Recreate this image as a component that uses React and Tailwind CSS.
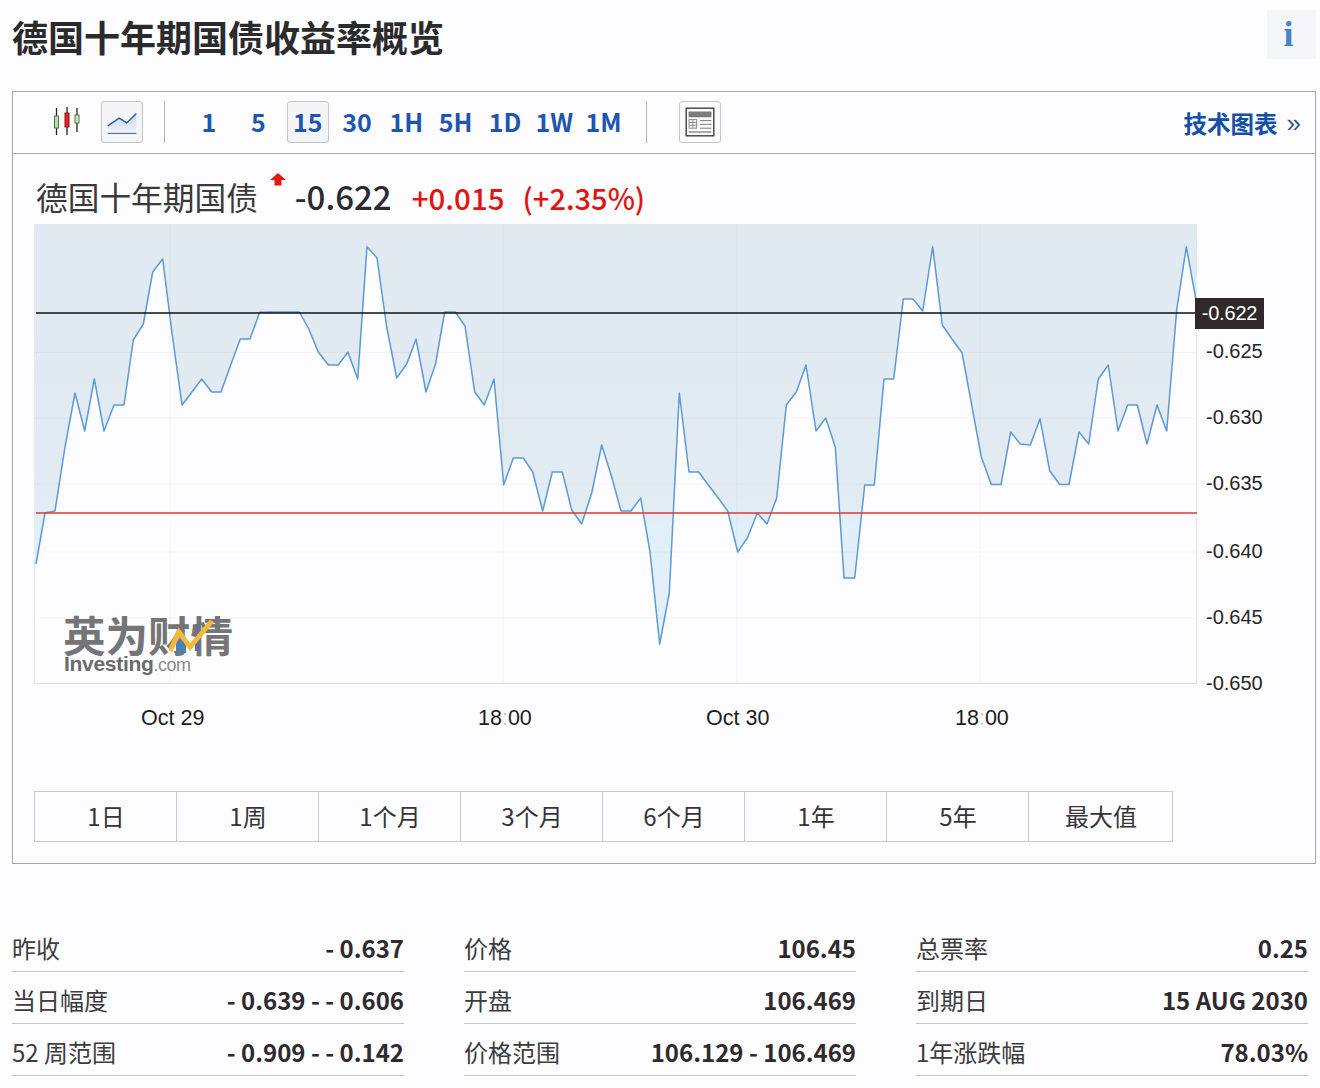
const pts = [[36,564],[45,513],[55,511],[65,447],[75,393],[84.7,431],[94.3,379],[104,431],[114,405],[124,405],[133.3,340],[143.3,324],[152.7,272],[162.7,259],[172,333],[182,405],[192,392],[201.7,379],[211.7,392],[221,392],[230.7,365],[240.3,339],[250,339],[259.7,312.3],[269.7,312],[279.3,312],[289.3,312],[299.3,312],[308.3,328],[318.3,352],[328.3,365],[338.3,365],[348,352],[357.7,379],[367,246.7],[377,258],[386.7,327],[396.7,378],[406.7,364],[416,339],[426,392],[435.5,364],[444.7,312],[455.3,312],[465,326],[474.7,392],[484.3,405],[494,379],[503.7,485],[513.3,458],[523.3,458],[532.7,472],[542.7,511],[552.3,472],[562.3,472],[571.7,510],[581.7,524],[591.7,493],[601.7,445],[611.7,477],[621,511],[631,511],[640.7,498],[650,552],[659.7,644],[669.3,593],[679.3,393],[689,472],[698.7,472],[708.3,485],[718.3,498],[727.7,511],[737.7,552],[747.3,538],[757.3,513],[767,524],[776.7,498],[786.3,405],[796.3,392],[806,365],[816,431],[825.7,418],[835.3,447],[844,578],[854.7,578],[864.7,485],[874.3,485],[884,379],[893.7,379],[903.3,299],[913,299],[922.7,311],[932.7,246.7],[942.3,325],[952,339],[962,352.7],[971.7,405],[981.3,457],[991.3,484.5],[1001,484.5],[1010.7,432],[1020.3,444],[1030.3,445],[1040,418.7],[1049.7,470.7],[1059.7,484.5],[1069,484.5],[1079,432],[1088.7,444],[1098.3,379],[1108.3,365],[1118,431],[1127.7,405],[1137.3,405],[1147,444],[1157,405],[1166.7,431],[1176.7,310],[1186.3,246.7],[1196,300]];
const linePts = pts.map((p) => p.join(",")).join(" ");
const areaPts = `34,224 34,564 ${linePts} 1197,300 1197,224`;

const intervals = ["1", "5", "15", "30", "1H", "5H", "1D", "1W", "1M"];
const ranges = ["1日", "1周", "1个月", "3个月", "6个月", "1年", "5年", "最大值"];
const columns = [
  [["昨收", "- 0.637"], ["当日幅度", "- 0.639 - - 0.606"], ["52 周范围", "- 0.909 - - 0.142"]],
  [["价格", "106.45"], ["开盘", "106.469"], ["价格范围", "106.129 - 106.469"]],
  [["总票率", "0.25"], ["到期日", "15 AUG 2030"], ["1年涨跌幅", "78.03%"]],
];
const axis = [["-0.625", 358], ["-0.630", 424], ["-0.635", 490], ["-0.640", 558], ["-0.645", 624], ["-0.650", 690]];
const hGrid = [352.5, 418, 484, 552, 618];
const vGrid = [170, 503, 737, 980];

function CandleIcon() {
  return (
    <svg viewBox="0 0 42 42" className="w-[42px] h-[42px]">
      <g stroke="#222" strokeWidth="1.3">
        <line x1="10.5" y1="6" x2="10.5" y2="33" />
        <line x1="21" y1="5" x2="21" y2="33" />
        <line x1="31" y1="6" x2="31" y2="30" />
      </g>
      <rect x="8.5" y="14" width="4" height="12" fill="#b7dcae" stroke="#4a7a45" />
      <rect x="19" y="11" width="4" height="14" fill="#e0231c" stroke="#8a1a16" />
      <rect x="29" y="13" width="4" height="8" fill="#cfe6c8" stroke="#4a7a45" />
    </svg>
  );
}

function LineIcon() {
  return (
    <svg viewBox="0 0 42 42" className="w-10 h-10">
      <defs>
        <linearGradient id="iconFill" x1="0" y1="0" x2="0" y2="1">
          <stop offset="0" stopColor="#c6d4ea" />
          <stop offset="1" stopColor="#eef2f9" />
        </linearGradient>
      </defs>
      <polygon points="6,25 18,17 26,22 36,12 36,32 6,32" fill="url(#iconFill)" />
      <polyline points="6,25 18,17 26,22 36,12" fill="none" stroke="#2a5c9e" strokeWidth="1.5" />
      <line x1="6" y1="33" x2="36" y2="33" stroke="#5c6f8c" strokeWidth="1.2" />
    </svg>
  );
}

function TableIcon() {
  return (
    <svg viewBox="0 0 42 42" className="w-10 h-10">
      <rect x="6.5" y="6.5" width="29" height="29" fill="#fafafa" stroke="#444" strokeWidth="1.5" />
      <rect x="9" y="10" width="24" height="6" fill="#7b7b7b" />
      <g stroke="#8a8a8a" strokeWidth="1" fill="none">
        <rect x="9.5" y="18.5" width="8" height="9" />
        <line x1="9.5" y1="21.5" x2="17.5" y2="21.5" />
        <line x1="9.5" y1="24.5" x2="17.5" y2="24.5" />
        <line x1="13.5" y1="18.5" x2="13.5" y2="27.5" />
      </g>
      <g stroke="#777" strokeWidth="1">
        <line x1="21" y1="19.5" x2="33" y2="19.5" />
        <line x1="21" y1="23.5" x2="33" y2="23.5" />
        <line x1="21" y1="27.5" x2="33" y2="27.5" />
      </g>
      <line x1="9" y1="31.5" x2="33" y2="31.5" stroke="#555" strokeWidth="1" />
    </svg>
  );
}

function Chart() {
  return (
    <div className="relative h-[516px]">
      <svg viewBox="13 224 1301 516" className="block w-[1301px] h-[516px] [font-family:'Liberation_Sans',Arial,sans-serif]">
        <defs>
          <linearGradient id="areaFill" gradientUnits="userSpaceOnUse" x1="0" y1="224" x2="0" y2="644">
            <stop offset="0" stopColor="#e1e9f1" />
            <stop offset="0.65" stopColor="#e2ebf2" />
            <stop offset="0.72" stopColor="#e1eff9" />
            <stop offset="1" stopColor="#e3eef7" />
          </linearGradient>
        </defs>
        <polygon points={areaPts} fill="url(#areaFill)" />
        {hGrid.map((y) => (
          <line key={y} x1="34" x2="1196" y1={y} y2={y} stroke="#000" strokeOpacity="0.035" />
        ))}
        {vGrid.map((x) => (
          <line key={x} x1={x} x2={x} y1="224" y2="683" stroke="#000" strokeOpacity="0.03" />
        ))}
        <line x1="34.5" x2="34.5" y1="560" y2="683" stroke="#e4e4e8" />
        <line x1="1196.5" x2="1196.5" y1="300" y2="683" stroke="#e4e4e8" />
        <line x1="34" x2="1197" y1="683.5" y2="683.5" stroke="#dcdcdf" />
        <polyline points={linePts} fill="none" stroke="#5b9ad6" strokeWidth="1.5" strokeLinejoin="round" />
        <line x1="36" x2="1197" y1="313" y2="313" stroke="#111" strokeWidth="1.6" />
        <line x1="36" x2="1197" y1="513" y2="513" stroke="#e2372c" strokeWidth="1.6" />
        {axis.map(([t, y]) => (
          <text key={t} x="1206" y={y} fontSize="20" fill="#262626">{t}</text>
        ))}
        <text x="141" y="725" fontSize="21.5" fill="#1c1c1c">Oct 29</text>
        <text x="478" y="725" fontSize="21.5" fill="#1c1c1c">18<tspan fill="#c9c9c9">:</tspan>00</text>
        <text x="706" y="725" fontSize="21.5" fill="#1c1c1c">Oct 30</text>
        <text x="955" y="725" fontSize="21.5" fill="#1c1c1c">18<tspan fill="#c9c9c9">:</tspan>00</text>
      </svg>
      <div className="absolute left-[1182px] top-[74px] w-[69px] h-[31px] bg-[#2e2a2a] text-white text-[20px] leading-[30px] text-center tracking-[-0.2px] [font-family:'Liberation_Sans',Arial,sans-serif]">
        -0.622
      </div>
      <div className="absolute left-[51px] top-[390px] w-[180px] text-[#757577]">
        <div className="-ml-px text-[42.5px] leading-[40px] font-bold whitespace-nowrap">英为财情</div>
        <div className="flex items-baseline [font-family:'Liberation_Sans',Arial,sans-serif] leading-[20px]">
          <span className="text-[21px] font-bold tracking-[-0.3px] text-[#6a6a6c]">Investing</span>
          <span className="text-[18px] text-[#8c8c8e] tracking-[-0.5px]">.com</span>
        </div>
      </div>
      <svg viewBox="0 0 50 40" className="absolute left-[156px] top-[394px] w-[50px] h-[40px]">
        <rect x="7" y="21" width="10" height="14" fill="#4d7fb0" />
        <rect x="26" y="6" width="5" height="27" fill="#6a6f90" />
        <polyline points="1,33 10,14 21,29 43,3" fill="none" stroke="#f5b93a" strokeWidth="5" />
      </svg>
    </div>
  );
}

export default function App() {
  return (
    <div className="min-h-screen bg-[#fdfcfe] pl-3 pr-1 [font-family:'Noto_Sans_CJK_SC','Liberation_Sans',sans-serif] overflow-hidden">
      <header className="h-[91px] flex justify-between items-start">
        <h1 className="mt-[11px] text-[36px] leading-[50px] font-bold text-[#2b2a2c]">德国十年期国债收益率概览</h1>
        <button className="mt-[10px] w-[49px] h-[49px] bg-[#f5f6fa] text-[#4a80cc] text-[36px] leading-[49px] font-bold pr-[6px] [font-family:'Liberation_Serif',serif]">i</button>
      </header>

      <section className="w-[1304px] h-[773px] border border-[#a6a6a8]">
        <div className="h-[62px] border-b border-[#a9a9ab] flex items-center pl-[33px] pr-[14px]">
          <div className="w-[42px] h-[42px]"><CandleIcon /></div>
          <div className="ml-[13px] -mt-[1px] w-[42px] h-[42px] border border-[#c4c4c6] rounded-[3px] bg-[#f3f5f9] flex items-center justify-center"><LineIcon /></div>
          <div className="ml-[21px] -mt-[1px] w-px h-[42px] bg-[#b5b5b7]" />
          <div className="ml-[23px] -mt-[1px] flex gap-[7.33px]">
            {intervals.map((t) => (
              <div
                key={t}
                className={
                  t === "15"
                    ? "w-[42px] h-[42px] rounded-[3px] border border-[#c4c4c6] bg-[#f3f5f9] flex items-center justify-center text-[25px] font-bold text-[#1d56b0]"
                    : "w-[42px] h-[42px] flex items-center justify-center text-[25px] font-bold text-[#1d56b0]"
                }
              >
                {t}
              </div>
            ))}
          </div>
          <div className="ml-[21px] -mt-[1px] w-px h-[42px] bg-[#b5b5b7]" />
          <div className="ml-[32px] -mt-[1px] w-[42px] h-[42px] border border-[#c4c4c6] rounded-[3px] bg-[#fbfbfc] flex items-center justify-center"><TableIcon /></div>
          <div className="ml-auto flex items-center mt-[3px]">
            <span className="text-[23.5px] font-bold text-[#1450a8]">技术图表</span>
            <span className="ml-[9px] text-[26px] leading-none text-[#33588f] -mt-[3px] [font-family:'Liberation_Sans',sans-serif]">»</span>
          </div>
        </div>

        <div className="h-[70px] pl-[23px] pt-[18px] flex items-start">
          <span className="text-[31.7px] leading-[48px] text-[#3a393b]">德国十年期国债</span>
          <svg viewBox="0 0 16 13" className="ml-[12px] mt-[1px] w-4 h-[13px]">
            <polygon points="8,0 16,7 11.5,7 11.5,12.5 4.5,12.5 4.5,7 0,7" fill="#e8160e" />
          </svg>
          <span className="ml-[9px] text-[33px] leading-[48px] font-medium text-[#2b2a35]">-0.622</span>
          <span className="ml-[20px] mt-[1px] text-[29.5px] leading-[48px] font-medium text-[#e01512]">+0.015</span>
          <span className="ml-[18px] mt-[1px] text-[29px] leading-[48px] font-medium text-[#e01512]">(+2.35%)</span>
        </div>

        <Chart />

        <div className="ml-[21px] mt-[51px] w-[1139px] h-[51px] flex border border-[#cbcbce]">
          {ranges.map((r, i) => (
            <div
              key={r}
              className={
                i < 7
                  ? "w-[142px] pb-[2px] pl-px border-r border-[#cbcbce] flex items-center justify-center text-[24px] text-[#353437]"
                  : "flex-1 pb-[2px] pl-px flex items-center justify-center text-[24px] text-[#353437]"
              }
            >
              {r}
            </div>
          ))}
        </div>
      </section>

      <div className="mt-[56px] flex gap-[60px]">
        {columns.map((rows, c) => (
          <div key={c} className="w-[392px]">
            {rows.map(([k, v]) => (
              <div key={k} className="h-[52px] border-b border-[#c6c6c8] flex items-center justify-between pt-[4px] text-[24px] text-[#2f2e30]">
                <span className="text-[#3d3c3e]">{k}</span>
                <span className="font-bold text-[#2f2a2e]">{v}</span>
              </div>
            ))}
          </div>
        ))}
      </div>
    </div>
  );
}
